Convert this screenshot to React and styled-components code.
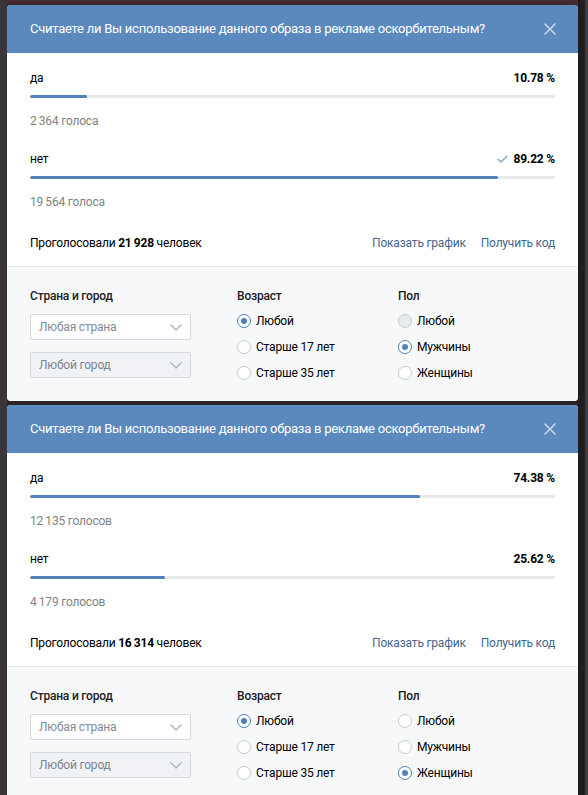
import React from "react";
import styled, { createGlobalStyle } from "styled-components";

const GlobalStyle = createGlobalStyle`
  html, body {
    margin: 0;
    padding: 0;
  }
  body {
    font-family: Roboto, "Open Sans", "Liberation Sans", sans-serif;
    font-size: 12px;
    letter-spacing: -0.2px;
    color: #000;
    background:
      linear-gradient(to right, #3a3536 0, #3a3536 7px, transparent 7px, transparent 578px, #1f1d1e 578px, #1f1d1e 585px, #3c3a3b 585px),
      linear-gradient(to bottom, #4b2b31 0, #3b2528 6px, #2a2224 6px);
    min-height: 795px;
    overflow: hidden;
  }
`;

const Page = styled.div`
  display: flex;
  flex-direction: column;
  gap: 4px;
  padding: 5px 10px 0 7px;
  height: 790px;
  overflow: hidden;
`;

const Panel = styled.section`
  width: 571px;
  flex-shrink: 0;
  background: #fff;
  border-radius: 4px;
  overflow: hidden;
`;

const Header = styled.header`
  height: 48px;
  display: flex;
  align-items: center;
  justify-content: space-between;
  padding: 0 22px 0 23px;
  background: #5b88bd;
`;

const Title = styled.h2`
  margin: 0;
  font-size: 13px;
  letter-spacing: -0.25px;
  font-weight: 400;
  line-height: 16px;
  color: #fff;
`;

const Close = styled.button`
  width: 12px;
  height: 12px;
  padding: 0;
  border: 0;
  background: none;
  display: flex;
  color: #c7d7ea;
`;

const Body = styled.div`
  padding: 17px 23px 15px;
  border-bottom: 1px solid #e7e8ec;
`;

const Option = styled.div`
  margin-bottom: 22px;
`;

const OptionHead = styled.div`
  display: flex;
  justify-content: space-between;
  align-items: center;
  line-height: 16px;
`;

const Percent = styled.span`
  display: flex;
  align-items: center;
  gap: 6px;
  font-weight: 700;
`;

const Track = styled.div`
  margin-top: 9px;
  height: 3px;
  border-radius: 2px;
  background: #e7e8ec;
  overflow: hidden;
`;

const Fill = styled.div`
  height: 100%;
  border-radius: 2px;
  background: #5181b8;
`;

const Count = styled.div`
  margin-top: 15px;
  line-height: 16px;
  color: #828282;
`;

const Footer = styled.div`
  display: flex;
  justify-content: space-between;
  line-height: 16px;
  margin-top: 25px;
`;

const Links = styled.div`
  display: flex;
  gap: 15px;
`;

const Link = styled.a`
  color: #45688f;
  text-decoration: none;
`;

const Filters = styled.div`
  display: grid;
  grid-template-columns: 207px 161px 1fr;
  align-items: start;
  padding: 21px 23px 15px;
  background: #f7f8fa;
`;

const Column = styled.div`
  display: flex;
  flex-direction: column;
`;

const FilterTitle = styled.div`
  font-weight: 500;
  line-height: 16px;
  color: #222;
  margin-bottom: ${(p) => p.$gap}px;
`;

const Select = styled.div`
  box-sizing: border-box;
  width: 161px;
  height: 26px;
  display: flex;
  align-items: center;
  justify-content: space-between;
  padding: 0 8px;
  border: 1px solid #d3d9de;
  border-radius: 2px;
  background: ${(p) => (p.$disabled ? "#f0f2f5" : "#fff")};
  color: ${(p) => (p.$disabled ? "#7d8791" : "#818c99")};
  & + & {
    margin-top: 12px;
  }
`;

const RadioRow = styled.label`
  height: 26px;
  display: flex;
  align-items: center;
  gap: 5px;
  color: #000;
`;

const RadioCircle = styled.span`
  box-sizing: border-box;
  width: 14px;
  height: 14px;
  border-radius: 50%;
  border: 1px solid ${(p) => (p.$checked ? "#5181b8" : "#c5ccd3")};
  background: ${(p) => (p.$hover ? "#e8ebef" : "#fff")};
  display: flex;
  align-items: center;
  justify-content: center;
  &::after {
    content: "";
    width: 6px;
    height: 6px;
    border-radius: 50%;
    background: ${(p) => (p.$checked ? "#5181b8" : "transparent")};
  }
`;

const CloseIcon = () => (
  <svg width="12" height="12" viewBox="0 0 12 12">
    <path d="M1 1L11 11M11 1L1 11" stroke="currentColor" strokeWidth="1.6" strokeLinecap="round" />
  </svg>
);

const Check = () => (
  <svg width="11" height="8" viewBox="0 0 11 8">
    <path d="M1 4.2L4 7L10 1" fill="none" stroke="#8aa9c9" strokeWidth="1.5" strokeLinecap="round" strokeLinejoin="round" />
  </svg>
);

const Chevron = () => (
  <svg width="12" height="7" viewBox="0 0 12 7">
    <path d="M1 1L6 6L11 1" fill="none" stroke="#a8b3bf" strokeWidth="1.3" strokeLinecap="round" strokeLinejoin="round" />
  </svg>
);

const Radio = ({ label, checked, hover }) => (
  <RadioRow>
    <RadioCircle $checked={checked} $hover={hover} />
    {label}
  </RadioRow>
);

const question = "Считаете ли Вы использование данного образа в рекламе оскорбительным?";

const polls = [
  {
    total: "21\u2009928",
    options: [
      { label: "да", pct: 10.78, count: "2\u2009364 голоса" },
      { label: "нет", pct: 89.22, count: "19\u2009564 голоса", mine: true },
    ],
    gender: "Мужчины",
    hoverAny: true,
  },
  {
    total: "16\u2009314",
    options: [
      { label: "да", pct: 74.38, count: "12\u2009135 голосов" },
      { label: "нет", pct: 25.62, count: "4\u2009179 голосов" },
    ],
    gender: "Женщины",
    hoverAny: false,
  },
];

const Poll = ({ poll }) => (
  <Panel>
    <Header>
      <Title>{question}</Title>
      <Close aria-label="close">
        <CloseIcon />
      </Close>
    </Header>
    <Body>
      {poll.options.map((o) => (
        <Option key={o.label}>
          <OptionHead>
            <span>{o.label}</span>
            <Percent>
              {o.mine && <Check />}
              {o.pct.toFixed(2)} %
            </Percent>
          </OptionHead>
          <Track>
            <Fill style={{ width: `${o.pct}%` }} />
          </Track>
          <Count>{o.count}</Count>
        </Option>
      ))}
      <Footer>
        <span>
          Проголосовали <b>{poll.total}</b> человек
        </span>
        <Links>
          <Link>Показать график</Link>
          <Link>Получить код</Link>
        </Links>
      </Footer>
    </Body>
    <Filters>
      <Column>
        <FilterTitle $gap={10}>Страна и город</FilterTitle>
        <Select>
          Любая страна
          <Chevron />
        </Select>
        <Select $disabled>
          Любой город
          <Chevron />
        </Select>
      </Column>
      <Column>
        <FilterTitle $gap={4}>Возраст</FilterTitle>
        <Radio label="Любой" checked />
        <Radio label="Старше 17 лет" />
        <Radio label="Старше 35 лет" />
      </Column>
      <Column>
        <FilterTitle $gap={4}>Пол</FilterTitle>
        <Radio label="Любой" hover={poll.hoverAny} />
        <Radio label="Мужчины" checked={poll.gender === "Мужчины"} />
        <Radio label="Женщины" checked={poll.gender === "Женщины"} />
      </Column>
    </Filters>
  </Panel>
);

export default function App() {
  return (
    <>
      <GlobalStyle />
      <Page>
        {polls.map((p, i) => (
          <Poll key={i} poll={p} />
        ))}
      </Page>
    </>
  );
}
